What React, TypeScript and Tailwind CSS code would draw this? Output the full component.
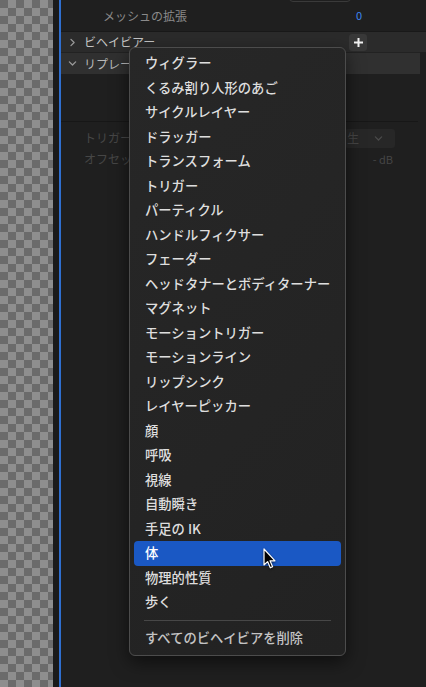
import React from 'react';

const ITEMS = [
  'ウィグラー', 'くるみ割り人形のあご', 'サイクルレイヤー', 'ドラッガー', 'トランスフォーム',
  'トリガー', 'パーティクル', 'ハンドルフィクサー', 'フェーダー', 'ヘッドタナーとボディターナー',
  'マグネット', 'モーショントリガー', 'モーションライン', 'リップシンク', 'レイヤーピッカー',
  '顔', '呼吸', '視線', '自動瞬き', '手足の IK', '体', '物理的性質', '歩く',
];

const ACTIVE = '体';

function Chevron({ down }: { down?: boolean }) {
  return (
    <svg width="9" height="9" viewBox="0 0 10 10" className="text-[#9a9a9a]">
      {down
        ? <path d="M1.5 3.2 L5 6.7 L8.5 3.2" fill="none" stroke="currentColor" strokeWidth="1.4" strokeLinecap="round" strokeLinejoin="round" />
        : <path d="M3.3 1.5 L6.8 5 L3.3 8.5" fill="none" stroke="currentColor" strokeWidth="1.4" strokeLinecap="round" strokeLinejoin="round" />}
    </svg>
  );
}

function Cursor() {
  return (
    <svg width="14" height="22" viewBox="0 0 14 22" className="absolute left-[263px] top-[548px] drop-shadow-[0_1px_1px_rgba(0,0,0,0.6)]">
      <path d="M1 1 L1 17 L4.6 13.6 L7.3 19.8 L9.6 18.8 L7 12.8 L12 12.8 Z" fill="#000" stroke="#fff" strokeWidth="1.2" strokeLinejoin="round" />
    </svg>
  );
}

export default function App() {
  return (
    <div className="relative w-[426px] h-[687px] flex overflow-hidden bg-[#1f1f1f] font-['Noto_Sans_CJK_JP','Noto_Sans',sans-serif]">
      {/* canvas checkerboard */}
      <div className="w-[53px] shrink-0 bg-[repeating-conic-gradient(#8e8e8e_0%_25%,#6b6b6b_0%_50%)] bg-[length:16px_16px]" />
      <div className="w-[6px] shrink-0 bg-[#1a1a1a]" />
      <div className="w-[2px] shrink-0 bg-[#2f6fd0]" />

      {/* inspector */}
      <div className="flex-1 flex flex-col bg-[#1f1f1f]">
        <div className="h-[31px] flex items-center relative">
          <span className="ml-[42px] text-[12px] text-[#8a8a8a]">メッシュの拡張</span>
          <span className="ml-auto mr-[64px] text-[11px] text-[#3d86f0]">0</span>
          <div className="absolute left-[228px] top-[-4px] w-[62px] h-[6px] border border-[#3a3a3a] rounded-b-sm" />
        </div>

        <div className="h-[21px] flex items-center bg-[#2b2b2b] border-t border-[#191919]">
          <div className="ml-[5px] w-[12px] flex justify-center"><Chevron /></div>
          <span className="ml-[6px] text-[12px] text-[#c4c4c4]">ビヘイビアー</span>
          <div className="ml-auto mr-[59px] w-[18px] h-[17px] rounded-[3px] bg-[#383838] flex items-center justify-center">
            <svg width="11" height="11" viewBox="0 0 11 11">
              <path d="M5.5 1 V10 M1 5.5 H10" stroke="#f2f2f2" strokeWidth="2" />
            </svg>
          </div>
        </div>

        <div className="h-[22px] flex items-center bg-[#303030] border-t border-[#222] mr-[6px]">
          <div className="ml-[5px] w-[12px] flex justify-center"><Chevron down /></div>
          <span className="ml-[6px] text-[12px] text-[#b8b8b8]">リプレー</span>
        </div>

        <div className="h-[47px]" />
        <div className="h-px bg-[#171717] mr-[8px]" />

        <div className="mt-[6px] h-[20px] flex items-center">
          <span className="ml-[23px] text-[12px] text-[#464646]">トリガー</span>
          <div className="ml-auto mr-[31px] w-[50px] h-[19px] rounded-[3px] bg-[#272727] flex items-center">
            <span className="ml-[2px] text-[12px] text-[#464646]">生</span>
            <svg width="9" height="9" viewBox="0 0 10 10" className="ml-auto mr-[12px]">
              <path d="M1.5 3.2 L5 6.7 L8.5 3.2" fill="none" stroke="#4a4a4a" strokeWidth="1.4" strokeLinecap="round" />
            </svg>
          </div>
        </div>

        <div className="mt-[2px] h-[18px] flex items-center">
          <span className="ml-[23px] text-[12px] text-[#464646]">オフセット</span>
          <span className="ml-auto mr-[33px] text-[11px] text-[#464646]">- dB</span>
        </div>
      </div>

      {/* popup menu */}
      <div className="absolute left-[129px] top-[47px] w-[217px] h-[609px] rounded-[6px] border border-[#4c4c4c] bg-[linear-gradient(135deg,#272727_0%,#252525_40%,#222222_100%)] shadow-[0_6px_18px_rgba(0,0,0,0.55)] px-[4px] pt-[3px] flex flex-col">
        {ITEMS.map(item => (
          <div
            key={item}
            className={`h-[24.5px] shrink-0 flex items-center pl-[11px] rounded-[4px] text-[13.3px] font-medium ${
              item === ACTIVE ? 'bg-[#1a58c4] text-white' : 'text-[#dedede]'
            }`}
          >
            {item}
          </div>
        ))}
        <div className="mx-[10px] mt-[5px] mb-[5px] h-px bg-[#474747] shrink-0" />
        <div className="h-[24px] shrink-0 flex items-center pl-[11px] text-[13.3px] font-medium text-[#c4c4c4]">
          すべてのビヘイビアを削除
        </div>
      </div>

      <Cursor />
    </div>
  );
}
